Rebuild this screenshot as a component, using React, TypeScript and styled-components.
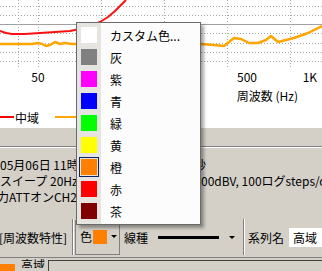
import React from "react"
import styled, { createGlobalStyle } from "styled-components"

const FONT = `"Noto Sans CJK JP", "Noto Sans", sans-serif`

const GlobalStyle = createGlobalStyle`
  html, body { margin: 0; padding: 0; }
  body {
    background: #d4d0c8;
    font-family: ${FONT};
    font-size: 12px;
    color: #000;
  }
`

const Screen = styled.div`
  position: relative;
  width: 322px;
  height: 271px;
  overflow: hidden;
  background: #d4d0c8;
  display: flex;
  flex-direction: column;
`

// ---- chart ----
const ChartPanel = styled.div`
  background: #fff;
  height: 128px;
  flex: none;
  display: flex;
  flex-direction: column;
`

const AxisTitle = styled.div`
  display: flex;
  justify-content: flex-end;
  padding-right: 24px;
  height: 20px;
  line-height: 20px;
  white-space: nowrap;
`

const Legend = styled.div`
  display: flex;
  align-items: center;
  height: 22px;
  white-space: nowrap;
`

const LegendLine = styled.span<{ $color: string; $w: number }>`
  display: inline-block;
  width: ${p => p.$w}px;
  height: 2px;
  background: ${p => p.$color};
`

const LegendName = styled.span`
  margin: 0 16px 0 1px;
`

// ---- info area ----
const GrayBand = styled.div`
  height: 18px;
  flex: none;
  border-bottom: 1px solid #808080;
  box-shadow: 0 1px 0 #fff;
`

const Info = styled.div`
  padding-top: 10px;
  height: 60px;
  flex: none;
`

const InfoLine = styled.div<{ $indent?: number }>`
  display: flex;
  height: 16px;
  line-height: 16px;
  white-space: nowrap;
  overflow: hidden;
  margin-left: ${p => p.$indent ?? 0}px;
`

const InfoVisible = styled.span<{ $w: number }>`
  width: ${p => p.$w}px;
  flex: none;
  overflow: hidden;
`

const InfoTail = styled.span<{ $ml: number }>`
  margin-left: ${p => p.$ml}px;
`

// ---- toolbar ----
const Toolbar = styled.div`
  height: 40px;
  flex: none;
  display: flex;
  align-items: center;
  white-space: nowrap;
`

const ToolLabel = styled.span<{ $ml?: number; $w?: number }>`
  margin-left: ${p => p.$ml ?? 0}px;
  ${p => (p.$w ? `width: ${p.$w}px; flex: none;` : "")}
`

const Sep = styled.span<{ $ml: number }>`
  width: 1px;
  height: 36px;
  margin-left: ${p => p.$ml}px;
  background: #808080;
  border-right: 1px solid #fff;
  flex: none;
`

const ColorButton = styled.div`
  display: flex;
  align-items: center;
  height: 35px;
  width: 45px;
  margin-left: 1px;
  box-sizing: border-box;
  border: 1px solid #808080;
  border-top: none;
  padding-left: 4px;
`

const Swatch = styled.span<{ $color: string; $size: number }>`
  display: inline-block;
  width: ${p => p.$size}px;
  height: ${p => p.$size}px;
  background: ${p => p.$color};
  flex: none;
`

const Arrow = styled.span<{ $ml: number }>`
  width: 0;
  height: 0;
  margin-left: ${p => p.$ml}px;
  border-left: 3px solid transparent;
  border-right: 3px solid transparent;
  border-top: 3px solid #000;
  flex: none;
`

const LineSample = styled.span`
  width: 61px;
  height: 3px;
  margin-left: 10px;
  background: #000;
  flex: none;
`

const NameInput = styled.div`
  margin-left: 5px;
  height: 19px;
  line-height: 19px;
  flex: 1;
  background: #fff;
  padding-left: 4px;
`

// ---- bottom list row ----
const ListRow = styled.div`
  flex: 1;
  display: flex;
  align-items: flex-end;
  white-space: nowrap;
  border-top: 1px solid #808080;
`

const ListName = styled.span`
  margin-left: 6px;
  line-height: 12px;
  height: 9px;
  overflow: hidden;
  align-self: flex-start;
  margin-top: 1px;
`

const ListBox = styled.div`
  flex: 1;
  align-self: stretch;
  margin: 2px 0 0 3px;
  border-top: 1px solid #404040;
  border-left: 1px solid #404040;
`

// ---- dropdown menu ----
const Menu = styled.div`
  position: absolute;
  left: 76px;
  top: 22px;
  width: 125px;
  box-sizing: border-box;
  border: 1px solid #6a6a6a;
  background: linear-gradient(to right, #e6e4e0 0, #e6e4e0 24px, #fcfcfc 24px);
  padding: 1px 0 2px;
  box-shadow: 3px 3px 3px rgba(0, 0, 0, 0.35);
`

const MenuItem = styled.div`
  display: flex;
  align-items: center;
  height: 22px;
  white-space: nowrap;
`

const MenuSwatchBox = styled.span<{ $selected: boolean }>`
  width: 20px;
  height: 20px;
  margin-left: 2px;
  box-sizing: border-box;
  display: flex;
  align-items: center;
  justify-content: center;
  border: 1px solid ${p => (p.$selected ? "#0a246a" : "transparent")};
  flex: none;
`

const MenuText = styled.span`
  margin-left: 11px;
`

const MENU_ITEMS: { label: string; color: string }[] = [
  { label: "カスタム色...", color: "#ffffff" },
  { label: "灰", color: "#808080" },
  { label: "紫", color: "#ff00ff" },
  { label: "青", color: "#0000ff" },
  { label: "緑", color: "#00ff00" },
  { label: "黄", color: "#ffff00" },
  { label: "橙", color: "#ff8000" },
  { label: "赤", color: "#ff0000" },
  { label: "茶", color: "#800000" },
]

const xOf = (f: number) => 38 + 209 * Math.log10(f / 50)

const RED = [
  [0, 31], [6, 33], [12, 34], [25, 34], [40, 33], [55, 32], [70, 31], [80, 29],
  [90, 26], [100, 22], [108, 17], [115, 11], [121, 5], [126, 0],
]
const ORANGE = [
  [0, 44], [20, 44], [32, 44], [38, 43], [42, 44], [46, 46], [50, 45], [55, 42],
  [60, 44], [65, 43], [72, 44], [80, 44], [200, 44], [214, 45], [224, 46], [229, 42],
  [234, 38], [241, 39], [249, 43], [258, 43], [266, 40], [271, 36], [278, 42], [286, 40],
  [294, 38], [308, 33], [322, 26],
]

const pts = (a: number[][]) => a.map(p => p.join(",")).join(" ")

const Plot: React.FC = () => {
  const vx = [40, 50, 100, 200, 400, 800].map(xOf)
  const hy = [6, 15, 33, 43, 52, 61]
  return (
    <svg width={322} height={86} style={{ display: "block" }}>
      {hy.map(y => (
        <line key={"h" + y} x1={0} x2={322} y1={y + 0.5} y2={y + 0.5} stroke="#a8a8a8" strokeDasharray="1 2" />
      ))}
      <line x1={0} x2={322} y1={24.5} y2={24.5} stroke="#a0a0a0" />
      {vx.map(x => (
        <line key={"v" + x} x1={Math.round(x) + 0.5} x2={Math.round(x) + 0.5} y1={0} y2={68} stroke="#a8a8a8" strokeDasharray="1 2" />
      ))}
      <polyline points={pts(ORANGE)} fill="none" stroke="#ffa500" strokeWidth={2.5} strokeLinejoin="round" />
      <polyline points={pts(RED)} fill="none" stroke="#ff1010" strokeWidth={2} strokeLinejoin="round" />
      {[[50, "50"], [500, "500"], [1000, "1K"]].map(([f, t]) => (
        <text key={t as string} x={xOf(f as number)} y={82} textAnchor="middle" fontSize={12} fontFamily={FONT} fill="#000">
          {t}
        </text>
      ))}
    </svg>
  )
}

const App: React.FC = () => {
  return (
    <>
      <GlobalStyle />
      <Screen>
        <ChartPanel>
          <Plot />
          <AxisTitle>周波数 (Hz)</AxisTitle>
          <Legend>
            <LegendLine $color="#ff0000" $w={14} />
            <LegendName>中域</LegendName>
            <LegendLine $color="#ffa500" $w={22} />
          </Legend>
        </ChartPanel>

        <GrayBand />

        <Info>
          <InfoLine>
            <InfoVisible $w={76}>05月06日 11時</InfoVisible>
            <InfoTail $ml={118}>秒</InfoTail>
          </InfoLine>
          <InfoLine>
            <InfoVisible $w={76}>スイープ 20Hz～</InfoVisible>
            <InfoTail $ml={125}>00dBV, 100ログsteps/dec</InfoTail>
          </InfoLine>
          <InfoLine $indent={-3}>
            <InfoVisible $w={79}>力ATTオンCH2入</InfoVisible>
          </InfoLine>
        </Info>

        <Toolbar>
          <ToolLabel $ml={-1} $w={73}>[周波数特性]</ToolLabel>
          <Sep $ml={0} />
          <ColorButton>
            <span>色</span>
            <Swatch $color="#ff8000" $size={14} style={{ marginLeft: 1 }} />
            <Arrow $ml={4} />
          </ColorButton>
          <ToolLabel $ml={4}>線種</ToolLabel>
          <LineSample />
          <Arrow $ml={10} />
          <Sep $ml={8} />
          <ToolLabel $ml={3}>系列名</ToolLabel>
          <NameInput>高域</NameInput>
        </Toolbar>

        <ListRow>
          <Swatch $color="#ff8000" $size={15} style={{ alignSelf: "flex-end", height: 7 }} />
          <ListName>高域</ListName>
          <ListBox />
        </ListRow>

        <Menu>
          {MENU_ITEMS.map(item => (
            <MenuItem key={item.label}>
              <MenuSwatchBox $selected={item.label === "橙"}>
                <Swatch $color={item.color} $size={16} />
              </MenuSwatchBox>
              <MenuText>{item.label}</MenuText>
            </MenuItem>
          ))}
        </Menu>
      </Screen>
    </>
  )
}

export default App
